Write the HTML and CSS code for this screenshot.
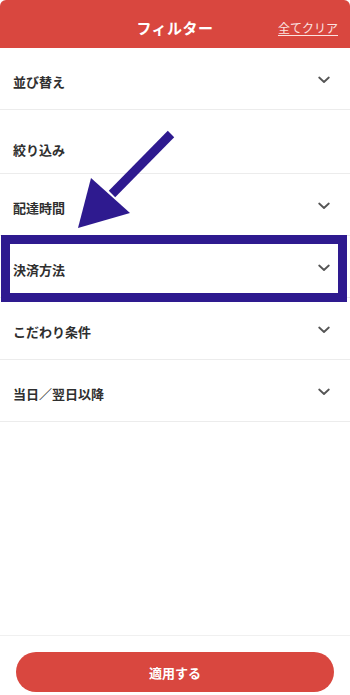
FILE: index.html
```html
<!DOCTYPE html>
<html lang="ja">
<head>
<meta charset="utf-8">
<link rel="stylesheet" href="styles.css">
</head>
<body>
<div class="sheet">
  <header class="header">
    <h1 class="title">フィルター</h1>
    <a class="clear">全てクリア</a>
  </header>
  <ul class="list">
    <li class="row"><span>並び替え</span><svg class="chev" viewBox="0 0 12 8"><path d="M1.2 1.5 L6 6 L10.8 1.5" /></svg></li>
    <li class="row row-plain"><span>絞り込み</span></li>
    <li class="row"><span>配達時間</span><svg class="chev" viewBox="0 0 12 8"><path d="M1.2 1.5 L6 6 L10.8 1.5" /></svg></li>
    <li class="row"><span>決済方法</span><svg class="chev" viewBox="0 0 12 8"><path d="M1.2 1.5 L6 6 L10.8 1.5" /></svg></li>
    <li class="row"><span>こだわり条件</span><svg class="chev" viewBox="0 0 12 8"><path d="M1.2 1.5 L6 6 L10.8 1.5" /></svg></li>
    <li class="row"><span>当日／翌日以降</span><svg class="chev" viewBox="0 0 12 8"><path d="M1.2 1.5 L6 6 L10.8 1.5" /></svg></li>
  </ul>
  <div class="spacer"></div>
  <footer class="footer">
    <button class="apply">適用する</button>
  </footer>
  <div class="highlight"></div>
  <svg class="arrow" viewBox="0 0 350 695" width="350" height="695">
    <line x1="171" y1="134" x2="112" y2="194" class="shaft" />
    <polygon points="78,228 91,178 130,213" class="head" />
  </svg>
</div>
</body>
</html>
```
FILE: styles.css
```css
* { box-sizing: border-box; margin: 0; padding: 0; }
html, body { width: 350px; height: 695px; background: #fff; }
body {
  font-family: "Noto Sans CJK JP", "Noto Sans", sans-serif;
  color: #333;
  overflow: hidden;
}
.sheet {
  position: relative;
  height: 695px;
  display: flex;
  flex-direction: column;
}
.header {
  height: 48px;
  background: #d9473f;
  border-radius: 6px 6px 0 0;
  display: flex;
  align-items: center;
  justify-content: center;
  position: relative;
  flex: none;
}
.title {
  color: #fff;
  font-size: 15px;
  font-weight: 700;
  letter-spacing: 0.5px;
  padding-top: 6px;
}
.clear {
  position: absolute;
  right: 12px;
  top: 19px;
  color: #fbe3e1;
  font-size: 12px;
  text-decoration: underline;
  text-underline-offset: 2px;
}
.list { list-style: none; flex: none; }
.row {
  height: 62px;
  padding: 5px 20px 0 13px;
  display: flex;
  align-items: center;
  justify-content: space-between;
  border-bottom: 1px solid #ececec;
  font-size: 13px;
  font-weight: 700;
  color: #2f2f2f;
}
.row-plain {
  height: 64px;
  padding-top: 16px;
}
.chev {
  width: 12px;
  height: 8px;
  fill: none;
  stroke: #555;
  stroke-width: 1.8;
  stroke-linecap: round;
  stroke-linejoin: round;
  margin-top: -3px;
}
.spacer { flex: 1; }
.footer {
  flex: none;
  border-top: 1px solid #f0f0f0;
  padding: 16px 16px 3px;
}
.apply {
  width: 318px;
  height: 40px;
  border: none;
  border-radius: 20px;
  background: #d9473f;
  color: #fff;
  font-family: "Noto Sans CJK JP", "Noto Sans", sans-serif;
  font-size: 13px;
  font-weight: 700;
  display: block;
}
.highlight {
  position: absolute;
  left: 1px;
  top: 235px;
  width: 346px;
  height: 67px;
  border: 9px solid #2e1a8f;
}
.arrow {
  position: absolute;
  left: 0;
  top: 0;
  pointer-events: none;
}
.shaft { stroke: #2e1a8f; stroke-width: 9; }
.head { fill: #2e1a8f; }
```
